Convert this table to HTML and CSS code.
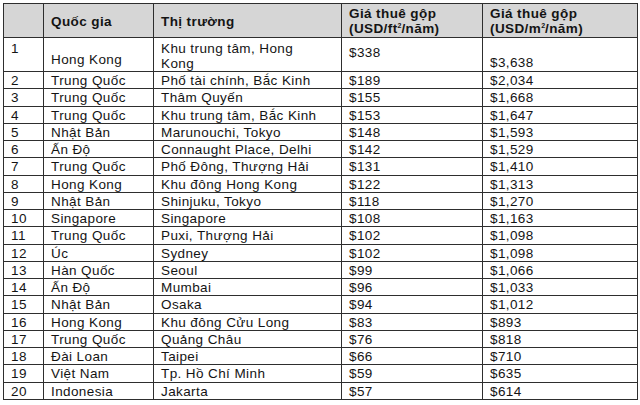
FILE: index.html
```html
<!DOCTYPE html>
<html lang="vi">
<head>
<meta charset="utf-8">
<title>Giá thuê văn phòng</title>
<link rel="stylesheet" href="styles.css">
</head>
<body>
<table class="rent">
  <colgroup>
    <col class="c-rank"><col class="c-country"><col class="c-market"><col class="c-ft"><col class="c-m">
  </colgroup>
  <thead>
    <tr class="head">
      <th></th>
      <th>Quốc gia</th>
      <th>Thị trường</th>
      <th>Giá thuê gộp<br>(USD/ft<sup>2</sup>/năm)</th>
      <th>Giá thuê gộp<br>(USD/m<sup>2</sup>/năm)</th>
    </tr>
  </thead>
  <tbody>
    <tr class="first">
      <td class="top">1</td>
      <td class="low">Hong Kong</td>
      <td class="wrap">Khu trung tâm, Hong<br>Kong</td>
      <td class="mid">$338</td>
      <td class="lower">$3,638</td>
    </tr>
    <tr><td>2</td><td>Trung Quốc</td><td>Phố tài chính, Bắc Kinh</td><td>$189</td><td>$2,034</td></tr>
    <tr><td>3</td><td>Trung Quốc</td><td>Thâm Quyến</td><td>$155</td><td>$1,668</td></tr>
    <tr><td>4</td><td>Trung Quốc</td><td>Khu trung tâm, Bắc Kinh</td><td>$153</td><td>$1,647</td></tr>
    <tr><td>5</td><td>Nhật Bản</td><td>Marunouchi, Tokyo</td><td>$148</td><td>$1,593</td></tr>
    <tr><td>6</td><td>Ấn Độ</td><td>Connaught Place, Delhi</td><td>$142</td><td>$1,529</td></tr>
    <tr><td>7</td><td>Trung Quốc</td><td>Phố Đông, Thượng Hải</td><td>$131</td><td>$1,410</td></tr>
    <tr><td>8</td><td>Hong Kong</td><td>Khu đông Hong Kong</td><td>$122</td><td>$1,313</td></tr>
    <tr><td>9</td><td>Nhật Bản</td><td>Shinjuku, Tokyo</td><td>$118</td><td>$1,270</td></tr>
    <tr><td>10</td><td>Singapore</td><td>Singapore</td><td>$108</td><td>$1,163</td></tr>
    <tr><td>11</td><td>Trung Quốc</td><td>Puxi, Thượng Hải</td><td>$102</td><td>$1,098</td></tr>
    <tr><td>12</td><td>Úc</td><td>Sydney</td><td>$102</td><td>$1,098</td></tr>
    <tr><td>13</td><td>Hàn Quốc</td><td>Seoul</td><td>$99</td><td>$1,066</td></tr>
    <tr><td>14</td><td>Ấn Độ</td><td>Mumbai</td><td>$96</td><td>$1,033</td></tr>
    <tr><td>15</td><td>Nhật Bản</td><td>Osaka</td><td>$94</td><td>$1,012</td></tr>
    <tr><td>16</td><td>Hong Kong</td><td>Khu đông Cửu Long</td><td>$83</td><td>$893</td></tr>
    <tr><td>17</td><td>Trung Quốc</td><td>Quảng Châu</td><td>$76</td><td>$818</td></tr>
    <tr><td>18</td><td>Đài Loan</td><td>Taipei</td><td>$66</td><td>$710</td></tr>
    <tr><td>19</td><td>Việt Nam</td><td>Tp. Hồ Chí Minh</td><td>$59</td><td>$635</td></tr>
    <tr><td>20</td><td>Indonesia</td><td>Jakarta</td><td>$57</td><td>$614</td></tr>
  </tbody>
</table>
</body>
</html>
```
FILE: styles.css
```css
html, body {
  margin: 0;
  padding: 0;
  background: #ffffff;
}
body {
  padding: 3px 0 0 3px;
  font-family: "Liberation Sans", Arial, sans-serif;
  color: #141414;
}
.rent {
  border-collapse: collapse;
  table-layout: fixed;
  width: 634px;
  font-size: 13.5px;
  letter-spacing: 0.4px;
}
.c-rank { width: 40px; }
.c-country { width: 110px; }
.c-market { width: 188px; }
.c-ft { width: 141px; }
.c-m { width: 155px; }
.rent th, .rent td {
  border: 1px solid #2e2e2e;
  padding: 0 4px 0 7px;
  text-align: left;
  overflow: hidden;
  white-space: nowrap;
}
.rent thead tr { height: 34px; }
.rent thead th {
  background: #d6d6d6;
  font-weight: bold;
  line-height: 15.5px;
  vertical-align: middle;
  padding-top: 1.5px;
}
.rent sup {
  font-size: 7px;
  line-height: 0;
  vertical-align: 5px;
  letter-spacing: 0;
}
.rent tbody tr { height: 17.26px; }
.rent tbody td {
  line-height: 15px;
  vertical-align: middle;
  padding-top: 1px;
}
.rent tbody tr.first { height: 34px; }
.rent tbody tr.first td {
  vertical-align: top;
  line-height: 14px;
}
.rent tbody tr.first td.top { padding-top: 4px; }
.rent tbody tr.first td.mid { padding-top: 8px; }
.rent tbody tr.first td.low { padding-top: 15px; }
.rent tbody tr.first td.lower { padding-top: 18px; }
.rent tbody tr.first td.wrap {
  line-height: 15px;
  padding-top: 3px;
}
```
